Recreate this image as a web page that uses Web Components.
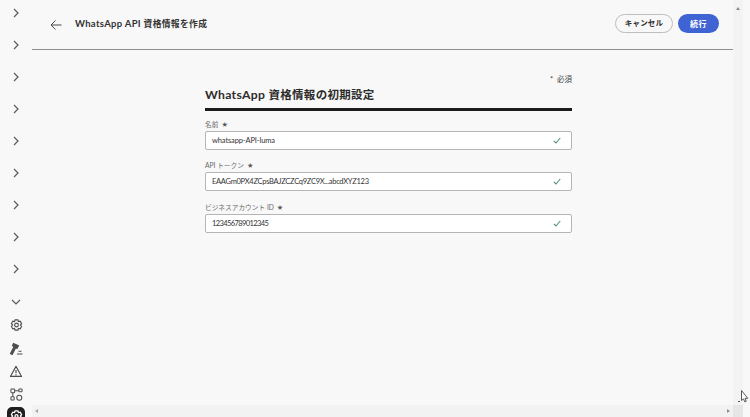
<!DOCTYPE html>
<html lang="ja"><head><meta charset="utf-8">
<style>
html,body{margin:0;height:100%;overflow:hidden;background:#f8f8f8}
body{font-family:"Lato","Noto Sans CJK JP",sans-serif;color:#2c2c2c}
</style></head><body>
<app-shell>
  <side-rail slot="rail"></side-rail>
  <page-header slot="header"></page-header>
  <setup-form>
    <text-field label="名前" value="whatsapp-API-luma" tracking="-.12px"></text-field>
    <text-field label="API トークン" value="EAAGm0PX4ZCpsBAJZCZCq9ZC9X...abcdXYZ123" tracking="-.28px"></text-field>
    <text-field label="ビジネスアカウント ID" value="123456789012345" tracking="-.6px"></text-field>
  </setup-form>
</app-shell>
<script>
const def=(n,html)=>customElements.define(n,class extends HTMLElement{
  connectedCallback(){const s=this.attachShadow({mode:'open'});s.innerHTML=typeof html==='function'?html(this):html;}
});
def('app-shell',`<style>
:host{display:grid;grid-template-columns:32px 701px 10px 7px;grid-template-rows:405px 12px;width:750px;height:417px;overflow:hidden;position:relative}
.rail{grid-row:1/3;overflow:hidden}
.main{display:flex;flex-direction:column;min-height:0}
.v{background:#f3f3f3;display:flex;justify-content:center;padding-top:7px;box-sizing:border-box;position:relative}
.h{background:#f2f2f2;display:flex;align-items:center;justify-content:space-between;padding:0 3px;grid-column:2/3}
.c{background:#e6e6e6}
i{display:block;width:0;height:0;border:2.5px solid transparent}
.up{border-bottom:3px solid #8a8a8a;border-top:0;height:0}
.l{border-right:3px solid #a5a5a5;border-left:0}
.r{border-left:3px solid #8f8f8f;border-right:0}
.cursor{position:absolute;left:738px;top:389px;width:11px;height:15px}
</style>
<div class="rail"><slot name="rail"></slot></div>
<div class="main"><slot name="header"></slot><slot></slot></div>
<div class="v"><i class="up"></i></div><div></div>
<div class="h"><i class="l"></i><i class="r"></i></div>
<div class="c"></div><div></div>
<svg class="cursor" viewBox="0 0 11 15"><path d="M3.500 1.500v10l2-1.600 1.300 3 1.500-.7-1.300-2.900h2.800z" fill="#fff" stroke="#5a5a5a" stroke-width="1"/><path d="M0 12.500h2" stroke="#555"/></svg>`);
const chev='<svg width="10" height="10" viewBox="0 0 10 10" fill="none" stroke="#5a5a5a" stroke-width="1.200"><path d="M3 1l4 4-4 4"/></svg>';
def('side-rail',`<style>
:host{display:flex;flex-direction:column;align-items:center;width:32px;height:417px;overflow:hidden;padding-top:0}
.list{margin-top:-3px}
.c{height:32px;display:flex;align-items:center;justify-content:center}
.d{height:32px;flex:none;display:flex;align-items:center;justify-content:center;margin-top:1px}
.i{height:23px;flex:none;display:flex;align-items:center;justify-content:center}
.a{width:18px;height:18px;border-radius:5px;background:#1f1f1f;display:flex;align-items:flex-start;justify-content:center;flex:none;margin-top:1px;padding-top:3px}
svg{display:block}
</style>
<div class="list">${Array(9).fill(`<div class="c">${chev}</div>`).join('')}</div>
<div class="d"><svg width="10" height="10" viewBox="0 0 10 10" fill="none" stroke="#5a5a5a" stroke-width="1.200"><path d="M1 3l4 4 4-4"/></svg></div>
<div class="i" style="margin-top:-4px"><svg width="13" height="13" viewBox="0 0 14 14" fill="none" stroke="#4d4d4d" stroke-width="1.200"><path d="M5.500 1h3l.6 1.800 1.900-.4 1.500 2.600L11.200 6.500 12.500 8 11 10.600l-1.900-.4-.6 1.800h-3l-.6-1.800-1.900.4L1.500 8l1.300-1.500L1.500 5 3 2.400l1.900.4z"/><circle cx="7" cy="6.500" r="2"/></svg></div>
<div class="i"><svg width="14" height="14" viewBox="0 0 14 14" fill="none" stroke="#4d4d4d" stroke-width="1.100"><path d="M4.500 1.500L9.500 3.800 8 6.500 6.800 5.600 3.200 12.500 1.500 11.500 5 4.700 3.500 3.500z" fill="#4d4d4d"/><path d="M8 12h5.500M9.500 9.300h3"/></svg></div>
<div class="i"><svg width="14" height="13" viewBox="0 0 14 14" fill="none" stroke="#4d4d4d" stroke-width="1.200"><path d="M7 1.500l6 10.800H1z" stroke-linejoin="round"/><path d="M7 5.500v3.500M7 10v1.200"/></svg></div>
<div class="i"><svg width="13" height="13" viewBox="0 0 14 14" fill="none" stroke="#4d4d4d" stroke-width="1.100"><rect x="1" y="1" width="4" height="4" rx=".8"/><rect x="9.500" y="1" width="3.500" height="3" rx=".8"/><rect x="1" y="9.500" width="3.500" height="3.500" rx=".8"/><circle cx="10" cy="10.500" r="2.700"/><path d="M5 3h4.500M3 5v4.500"/></svg></div>
<div class="a"><svg width="13" height="13" viewBox="0 0 14 14" fill="none" stroke="#fff" stroke-width="1.400"><path d="M5.500 1h3l.6 1.800 1.900-.4 1.500 2.600L11.200 6.500 12.500 8 11 10.600l-1.900-.4-.6 1.800h-3l-.6-1.800-1.900.4L1.500 8l1.300-1.500L1.500 5 3 2.400l1.900.4z"/><circle cx="7" cy="6.500" r="1.600"/></svg></div>`);
def('page-header',`<style>
:host{display:flex;align-items:center;height:50px;box-sizing:border-box;border-bottom:1px solid #8e8e8e;padding:0 14px 2px 18px;flex:none}
svg{display:block;flex:none;margin-top:2px}
h1{margin:0 0 0 13px;font-size:9.500px;font-weight:700;letter-spacing:.3px;flex:1;color:#333;white-space:nowrap}
h1 span{font-size:8.800px}
.b{display:flex;gap:5px}
button{font:inherit;font-weight:700;height:19px;border-radius:10px;box-sizing:border-box;padding:0;line-height:1}
.s{width:58px;background:#f8f8f8;border:1.500px solid #bdbdbd;color:#2c2c2c;font-size:7.500px;letter-spacing:.2px}
.p{width:41px;background:#3f63d3;border:0;color:#fff;font-size:8px;letter-spacing:.4px}
</style>
<svg width="12" height="12" viewBox="0 0 12 12" fill="none" stroke="#4a4a4a" stroke-width="1"><path d="M11.500 6H1M5.500 1.500L1 6l4.500 4.500"/></svg>
<h1>WhatsApp API <span>資格情報を作成</span></h1>
<div class="b"><button class="s">キャンセル</button><button class="p">続行</button></div>`);
def('setup-form',`<style>
:host{display:flex;flex-direction:column;width:367px;margin:0 0 0 173px}
.req{font-size:7.500px;text-align:right;color:#444;margin-top:24px;line-height:11px;height:11px;white-space:pre}
h2{margin:1px 0 0;font-size:12.200px;font-weight:700;line-height:17px;letter-spacing:.3px;color:#2c2c2c;white-space:nowrap}
h2 span{font-size:11.500px}
hr{margin:4.500px 0 0;height:3px;border:0;background:#1c1c1c;flex:none}
.f{display:flex;flex-direction:column;gap:10.500px;margin-top:8px}
</style>
<div class="req">*  必須</div><h2>WhatsApp <span>資格情報の初期設定</span></h2><hr><div class="f"><slot></slot></div>`);
def('text-field',h=>`<style>
:host{display:block}
label{display:flex;align-items:center;gap:3.500px;font-size:6.700px;line-height:11px;height:12px;box-sizing:border-box;padding-bottom:1px;color:#6a6a6a;white-space:nowrap}
.star{font-size:5.500px;color:#555}
.in{height:19px;box-sizing:border-box;border:1.500px solid #b5b5b5;border-radius:2px;background:#fff;display:flex;align-items:center;justify-content:space-between;padding:0 10px 0 6px;font-size:7.500px;letter-spacing:${h.getAttribute('tracking')};color:#333;white-space:nowrap}
svg{display:block;flex:none}
</style>
<label>${h.getAttribute('label')}<span class="star">★</span></label>
<div class="in"><span>${h.getAttribute('value')}</span><svg width="8" height="7" viewBox="0 0 8 7" fill="none" stroke="#4f8f78" stroke-width="1.100"><path d="M.8 3.800L3 6 7.200 1"/></svg></div>`);
</script>
</body></html>
